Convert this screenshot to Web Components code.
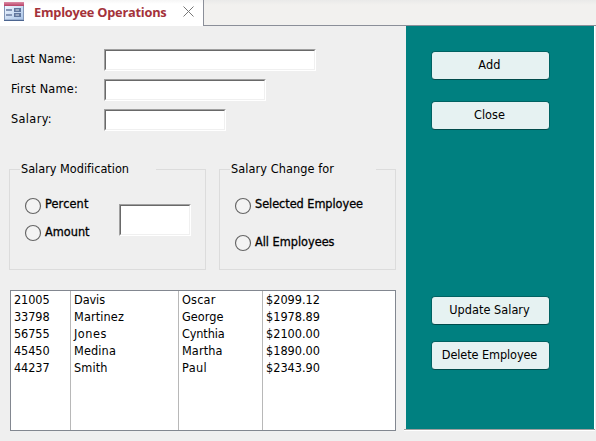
<!DOCTYPE html>
<html lang="en"><head><meta charset="utf-8"><title>Employee Operations</title>
<style>
html,body{margin:0;height:441px;overflow:hidden;background:#efefef}
body{font:12.6px/16px "DejaVu Sans Condensed","DejaVu Sans",sans-serif;font-stretch:condensed;color:#000}
</style></head><body><employee-window></employee-window>
<script>
const define = (name, html, setup) => customElements.define(name, class extends HTMLElement {
  connectedCallback() {
    if (this.shadowRoot) return;
    const t = document.createElement('template');
    t.innerHTML = html;
    this.attachShadow({mode: 'open'}).append(t.content.cloneNode(true));
    if (setup) setup(this, this.shadowRoot);
  }
});

// A label spaced out to an exact advance width given by w.
customElements.define('fit-text', class extends HTMLElement {
  connectedCallback() {
    if (this.shadowRoot) return;
    this.attachShadow({mode: 'open'}).innerHTML = '<style>:host{display:block;white-space:nowrap}span{display:inline-block}</style><span></span>';
    const s = this.shadowRoot.querySelector('span'), text = this.getAttribute('text');
    s.textContent = text;
    const w = +this.getAttribute('w');
    if (w) s.style.letterSpacing = ((w - s.getBoundingClientRect().width) / text.length) + 'px';
  }
});

define('sunken-box', `<style>:host{display:block;box-sizing:border-box;background:#fff;border:1px solid;border-color:#a0a0a0 #fff #fff #a0a0a0;height:22px}
div{box-sizing:border-box;height:100%;border:1px solid;border-color:#696969 #f0f0f0 #f0f0f0 #696969}</style><div></div>`);

define('form-field', `<style>:host{display:grid;grid-template-columns:93px auto;height:22px}
fit-text{padding-top:2px}</style><fit-text></fit-text><sunken-box></sunken-box>`, (el, r) => {
  const f = r.querySelector('fit-text'), t = document.createElement('fit-text');
  t.setAttribute('text', el.getAttribute('label')); t.setAttribute('w', el.getAttribute('w'));
  f.replaceWith(t);
  r.querySelector('sunken-box').style.width = el.getAttribute('size') + 'px';
});

define('option-group', `<style>:host{display:grid;grid-template-rows:14px 94px;height:108px}
header{display:grid;grid-template-columns:11px var(--gap) 1fr;height:14px}
i{margin-top:7px;border-top:1px solid #dcdcdc}i:first-child{border-left:1px solid #dcdcdc}i:last-child{border-right:1px solid #dcdcdc}
.t{padding-left:1px;margin-top:-1px}
main{box-sizing:border-box;border:1px solid #dcdcdc;border-top:0;display:flex;padding-left:15px}
</style><header><i></i><div class="t"><slot name="title"></slot></div><i></i></header><main><slot></slot></main>`);

define('radio-option', `<style>:host{display:flex;height:18px}
svg{flex:none;width:18px;height:18px;margin-right:3px;margin-left:-1px}
div{-webkit-text-stroke:.3px #000;margin-top:var(--lift,-1px)}</style>
<svg viewBox="0 0 18 18"><circle cx="9" cy="9" r="7.5" fill="#f3f3f3" stroke="#666" stroke-width="1.15"/></svg><div><slot></slot></div>`);

define('push-button', `<style>:host{display:block;height:29px}
button{all:unset;box-sizing:border-box;width:119px;height:29px;border:1px solid #006262;border-bottom-color:#004b4b;border-radius:4px;background:#e6f2f2;display:flex;justify-content:center;align-items:flex-start;padding:5px 2px 0 0}</style><button><slot></slot></button>`);

define('tab-bar', `<style>:host{display:grid;grid-template-columns:203px 1fr;height:26px}
.tab{background:linear-gradient(#f6f6f6,#fff 4px);display:flex;align-items:flex-start;padding-left:4px}
.rest{border-left:1px solid #8b8f99;border-bottom:1px solid #8b8f99;background:linear-gradient(#eaeae9,#f2f1ef 5px)}
.icon{width:20px;height:19px;margin-top:2px;margin-right:10px}
.title{font:bold 12.8px/18px "Open Sans","Noto Sans",sans-serif;font-stretch:normal;color:#a4323a;margin-top:3px;width:149px}
.x{width:11px;height:11px;margin-top:6px}</style>
<div class="tab"><svg class="icon" viewBox="0 0 20 19"><defs><linearGradient id="r" x2="0" y2="1"><stop stop-color="#dc8ba5"/><stop offset="1" stop-color="#b84065"/></linearGradient><linearGradient id="b" x2="1" y2="1"><stop stop-color="#f1f7ff"/><stop offset="1" stop-color="#a9c4e8"/></linearGradient></defs>
<path d="M0 4H20V19H0Z" fill="#8397b8"/><path d="M1 4H19V17.5H1Z" fill="url(#b)"/><path d="M0 18H20V19H0Z" fill="#4c6590"/><path d="M0 0H20V4H0Z" fill="url(#r)"/><path d="M2 7H8V9H2ZM2 12H8V14H2Z" fill="#8495b6"/><path d="M10 6H17V10H10ZM10 11H17V15H10Z" fill="#60769d"/><path d="M11.5 7.5H15V8.5H11.5ZM11.5 12.5H15V13.5H11.5Z" fill="#d8e0ec"/></svg>
<div class="title"><fit-text text="Employee Operations" w="132.5"></fit-text></div>
<svg class="x" viewBox="0 0 11 11"><path d="M.5 .5L10.5 10.5M10.5 .5L.5 10.5" stroke="#777" fill="none"/></svg></div><div class="rest"></div>`);

define('employee-list', `<style>:host{box-sizing:border-box;display:grid;grid-template-columns:60px 108px 84px 1fr;width:386px;height:141px;border:1px solid #828790;background:#fff}
div{box-sizing:border-box;padding:0 0 0 3px;line-height:17px}div:not(:last-child){border-right:1px solid #b8b8b8}</style>`, (el, r) => {
  [[['21005',35.5],['33798',35.5],['56755',35.5],['45450',35.5],['44237',35.5]],
   [['Davis',31],['Martinez',50],['Jones',33],['Medina',42],['Smith',33.5]],
   [['Oscar',33.5],['George',41.5],['Cynthia',42.5],['Martha',40.5],['Paul',25]],
   [['$2099.12',54],['$1978.89',54],['$2100.00',54],['$1890.00',54],['$2343.90',54]]].forEach(col => {
    const d = document.createElement('div');
    for (const [t, w] of col) { const f = document.createElement('fit-text'); f.setAttribute('text', t); f.setAttribute('w', w); d.append(f); }
    r.append(d);
  });
});

define('employee-window', `<style>:host{display:block;width:596px;height:441px;background:#efefef}
.body{display:grid;grid-template-columns:404px 192px}
.left{padding:23px 0 0 9px}
.fields{display:grid;row-gap:8px;align-content:start;padding-left:2px;height:113px}
.groups{display:flex;gap:13px;height:128px}
.groups option-group:first-child{width:197px;--gap:136px}.groups option-group:last-child{width:177px;--gap:146px}
.col{display:flex;flex-direction:column;gap:9px;margin-top:21px}
.col radio-option:last-child{--lift:0px}
.wide{gap:19px}
.amt{width:72px;height:32px;margin:28px 0 0 auto;margin-right:14px}
employee-list{margin-left:1px}
.right{height:403px;border-bottom:1px solid #a0a0a0;box-shadow:0 1px #fff;width:191px}
.teal{box-sizing:border-box;background:teal;width:188px;height:403px;margin-left:2px;padding:25px 0 0 25px;box-shadow:1px 0 #fff}
.b{margin-bottom:21px}.c{margin-bottom:166px}.u{margin-bottom:16px}
</style><tab-bar></tab-bar><div class="body"><div class="left">
<div class="fields"><form-field label="Last Name:" w="65" size="212"></form-field><form-field label="First Name:" w="67" size="162"></form-field><form-field label="Salary:" w="41" size="122"></form-field></div>
<div class="groups"><option-group><fit-text slot="title" text="Salary Modification" w="108"></fit-text>
<div class="col"><radio-option><fit-text text="Percent" w="43.5"></fit-text></radio-option><radio-option><fit-text text="Amount" w="44.5"></fit-text></radio-option></div><sunken-box class="amt"></sunken-box></option-group>
<option-group><fit-text slot="title" text="Salary Change for" w="103"></fit-text><div class="col wide"><radio-option><fit-text text="Selected Employee" w="108"></fit-text></radio-option><radio-option><fit-text text="All Employees" w="79.5"></fit-text></radio-option></div></option-group></div>
<employee-list></employee-list></div>
<div class="right"><div class="teal"><push-button class="b"><fit-text text="Add" w="22.5"></fit-text></push-button><push-button class="c"><fit-text text="Close" w="31"></fit-text></push-button><push-button class="u"><fit-text text="Update Salary" w="80.5"></fit-text></push-button><push-button><fit-text text="Delete Employee" w="95.5"></fit-text></push-button></div></div></div>`);
</script></body></html>
